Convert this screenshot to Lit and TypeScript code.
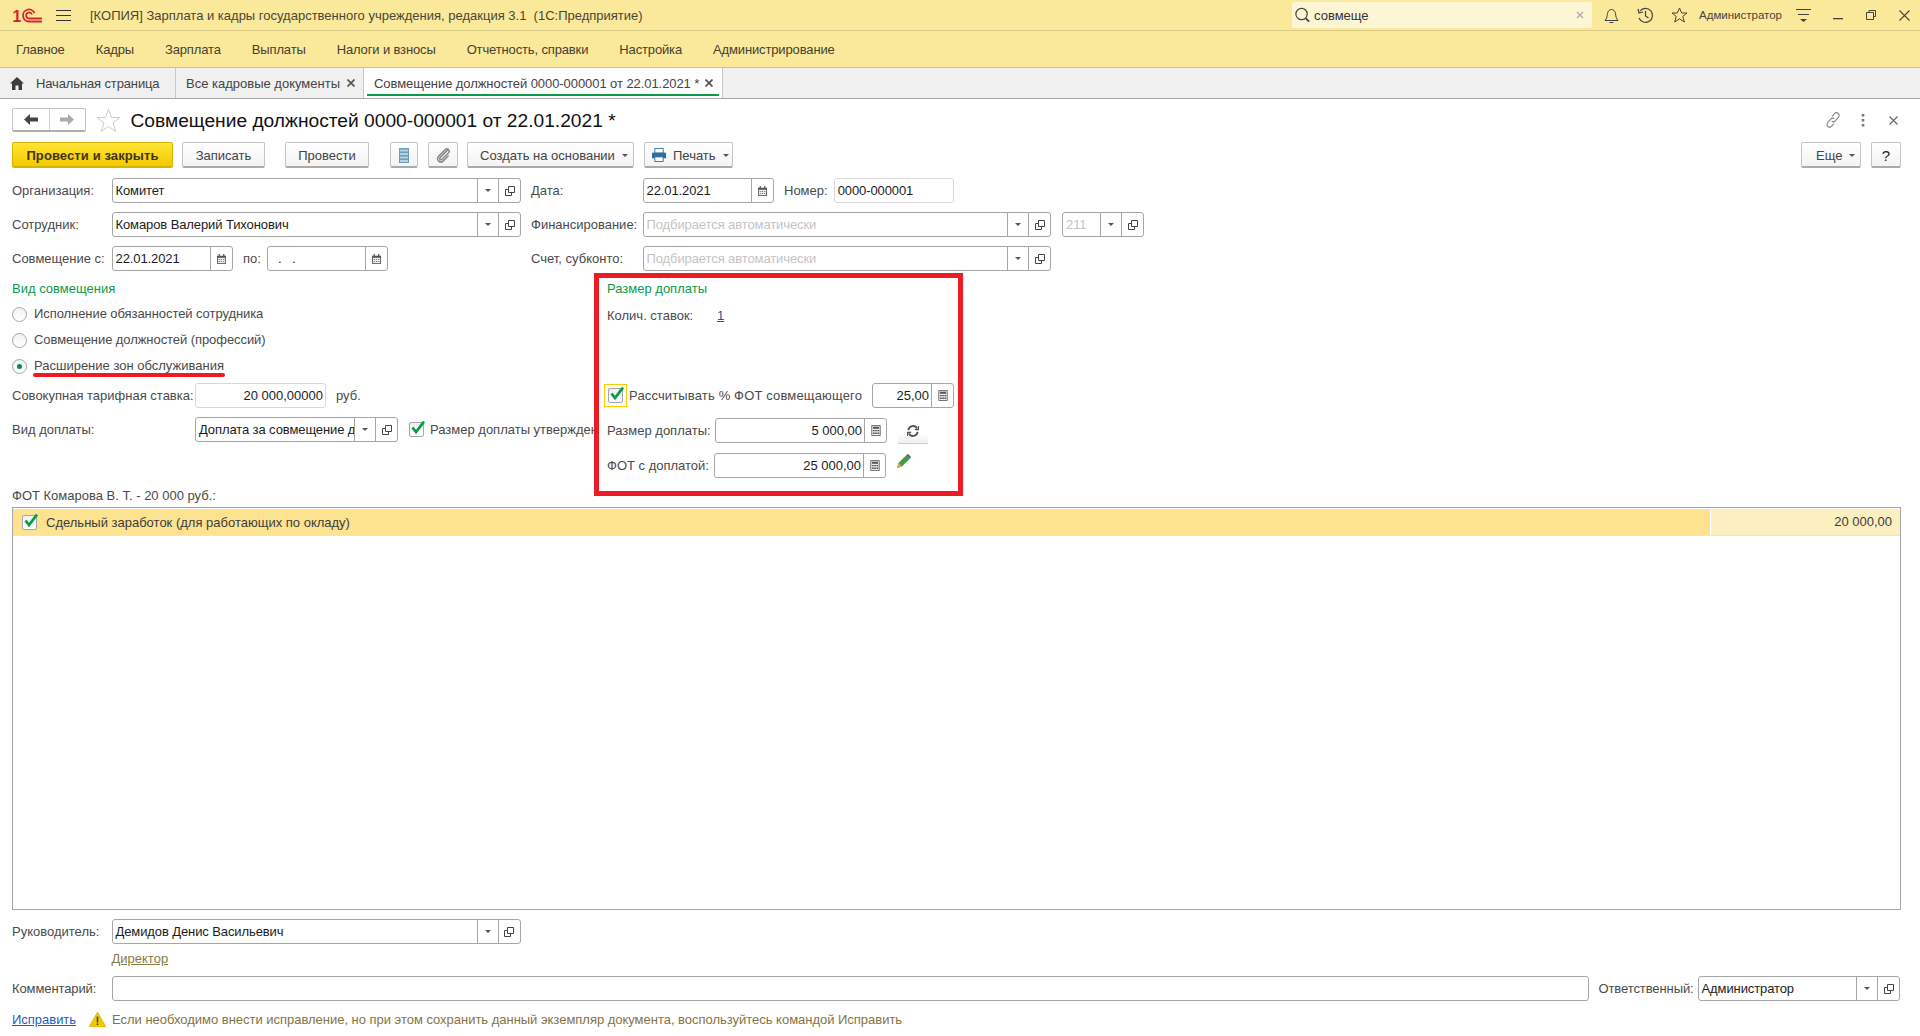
import { LitElement, html, css, svg } from 'lit'
import { customElement } from 'lit/decorators.js'

const ic = {
  caret: html`<svg class="caret" width="6" height="3" viewBox="0 0 6 3"><path d="M0 0h6L3 3z" fill="#555"/></svg>`,
  open: html`<svg width="10" height="10" viewBox="0 0 10 10" fill="none" stroke="#444"><path d="M3.500.500h6v6h-6zM3.500 3.500h-3v6h6v-3"/></svg>`,
  cal: html`<svg width="9" height="10" viewBox="0 0 11 12"><path d="M0 2h11v10H0z" fill="#555"/><path d="M2 0h1.500v3H2zM7.500 0H9v3H7.500z" fill="#555"/><path d="M1 4.500h9V11H1z" fill="#eee"/><path d="M2 6h1.500v1H2zM4.700 6h1.500v1H4.700zM7.400 6h1.500v1H7.400zM2 8.500h1.500v1H2zM4.700 8.500h1.500v1H4.700zM7.400 8.500h1.500v1H7.400z" fill="#555"/></svg>`,
  calc: html`<svg width="10" height="11" viewBox="0 0 11 13"><path d="M.5.500h10v12H.5z" fill="#eee" stroke="#555"/><path d="M2 2h7v2.500H2z" fill="#555"/><path d="M2 6h2v1.500H2zM4.600 6h2v1.500h-2zM7.200 6h2v1.500h-2zM2 9h2v1.500H2zM4.600 9h2v1.500h-2zM7.200 9h2v1.500h-2z" fill="#555"/></svg>`,
  check: html`<svg class="tick" width="16" height="15" viewBox="0 0 16 15"><path d="M3.500 7.500L7 12l8-10.500" fill="none" stroke="#0a9a4a" stroke-width="2.800"/></svg>`,
  close: html`<svg width="8" height="8" viewBox="0 0 8 8" stroke="#555" stroke-width="1.700"><path d="M.5.500l7 7M7.500.500l-7 7"/></svg>`,
}

@customElement('app-root')
class App extends LitElement {
  static styles = css`
    :host {
      display: flex;
      flex-direction: column;
      width: 1920px;
      height: 1036px;
      overflow: hidden;
      position: relative;
      background: #fff;
      font: 13px 'Liberation Sans', Arial, sans-serif;
      color: #4a4a4a;
    }
    a { color: inherit; }
    /* title bar */
    .titlebar {
      height: 30px;
      flex: none;
      display: flex;
      align-items: center;
      background: #fbe99b;
      border-bottom: 1px solid #d8ca86;
      color: #4a4636;
    }
    .logo { margin-left: 12px; width: 32px; height: 18px; }
    .burger { margin-left: 12px; width: 15px; height: 11px; border-top: 1px solid #333; border-bottom: 1px solid #333; position: relative; box-sizing: border-box; }
    .burger::after { content: ''; position: absolute; left: 0; right: 0; top: 4px; height: 1px; background: #333; }
    .apptitle { margin-left: 19px; flex: 1; white-space: pre; }
    .search { width: 300px; height: 26px; background: #fdf6d5; border-radius: 2px; display: flex; align-items: center; box-sizing: border-box; padding: 0 8px 0 2px; color: #333; }
    .search span { flex: 1; margin-left: 3px; }
    .sysicons { display: flex; align-items: center; width: 328px; }
    .sys { display: flex; justify-content: center; flex: none; }
    .s-bell { width: 38px; }
    .s-hist { width: 30px; }
    .s-star { width: 38px; }
    .user { font-size: 11.500px; width: 85px; white-space: nowrap; color: #444; }
    .s-menu { width: 40px; }
    .s-min { width: 30px; }
    .s-max { width: 36px; }
    .s-close { width: 31px; }
    /* menu */
    .menu {
      height: 36px;
      flex: none;
      display: flex;
      align-items: center;
      padding-left: 16px;
      gap: 31px;
      background: #fbe99b;
      border-bottom: 1px solid #cfc289;
      color: #444030;
      letter-spacing: -0.14px;
    }
    /* tabs */
    .tabs {
      height: 30px;
      flex: none;
      display: flex;
      background: #f0f0f0;
      border-bottom: 1px solid #a8a8a8;
    }
    .tab { display: flex; align-items: center; border-right: 1px solid #c8c8c8; white-space: nowrap; box-sizing: border-box; color: #444; position: relative; }
    .tab.home { width: 176px; padding-left: 10px; gap: 12px; letter-spacing: -0.13px; }
    .tab.docs { width: 188px; padding-left: 10px; gap: 7px; }
    .tab.cur { width: 359px; padding-left: 10px; gap: 6px; background: #fff; letter-spacing: -0.07px; }
    .tab.cur::after { content: ''; position: absolute; left: 3px; right: 3px; bottom: 2px; height: 2px; background: #0a9a4a; }
    /* form */
    .form { flex: 1; min-height: 0; display: flex; flex-direction: column; padding: 0 19px 0 12px; }
    .head { display: flex; align-items: center; height: 24px; margin-top: 9px; }
    .nav { display: flex; width: 74px; height: 24px; border: 1px solid #c4c4c4; border-bottom: 2px solid #b0b0b0; border-radius: 2px; box-sizing: border-box; }
    .nav div { flex: 1; display: flex; align-items: center; justify-content: center; }
    .nav div + div { border-left: 1px solid #d4d4d4; }
    .star { margin: 0 9.500px 0 10px; }
    h1 { margin: 0; padding-top: 1px; font-size: 19.200px; font-weight: 400; color: #111; flex: 1; white-space: nowrap; }
    .headtools { display: flex; align-items: center; gap: 20px; padding-right: 3px; }
    .headtools .hx { margin-left: 4px; }
    .bar { display: flex; height: 26px; margin-top: 10px; align-items: stretch; }
    .btn {
      box-sizing: border-box;
      display: flex;
      align-items: center;
      justify-content: center;
      gap: 7px;
      padding-top: 1px;
      border: 1px solid #c4c4c4;
      border-bottom: 2px solid #aaa;
      border-radius: 2px;
      background: linear-gradient(#fff, #f3f3f3);
      color: #444;
      white-space: nowrap;
    }
    .btn.main { width: 161px; background: linear-gradient(#ffe534, #f5c800); border-color: #d8b400; color: #3d3614; font-weight: 700; letter-spacing: 0.1px; }
    .b-save { width: 83px; margin-left: 9px; }
    .b-post { width: 84px; margin-left: 20px; }
    .b-list { width: 28px; margin-left: 21px; }
    .b-clip { width: 30px; margin-left: 10px; }
    .btn.b-base { width: 167px; margin-left: 9px; justify-content: flex-start; padding-left: 12px; }
    .btn.b-print { width: 89px; margin-left: 10px; justify-content: flex-start; padding-left: 7px; }
    .btn.b-more { width: 60px; margin-left: auto; justify-content: flex-start; padding-left: 14px; }
    .btn.b-help { width: 30px; margin-left: 10px; color: #222; font-size: 15px; }
    /* columns */
    .cols { display: flex; margin-top: 10px; }
    .left { width: 519px; flex: none; }
    .right { flex: 1; min-width: 0; }
    .row { display: flex; align-items: center; height: 25px; margin-bottom: 9px; white-space: nowrap; }
    .lab { flex: none; }
    .l-a { width: 99.500px; }
    .l-b { width: 111.500px; }
    .field {
      box-sizing: border-box;
      height: 25px;
      flex: none;
      display: flex;
      align-items: stretch;
      border: 1px solid #a6a6a6;
      border-radius: 3px;
      background: #fff;
      color: #1c1c1c;
    }
    .field.soft { border-color: #d8d8d8; }
    .val { flex: 1; min-width: 0; overflow: hidden; white-space: pre; padding: 0 3px; line-height: 23px; letter-spacing: -0.1px; }
    .val.num { text-align: right; padding-right: 2px; letter-spacing: 0; }
    .val.ph { color: #c4c4c4; }
    .fb { flex: none; display: flex; align-items: center; justify-content: center; border-left: 1px solid #a6a6a6; width: 20px; }
    .fb:last-child { width: 21px; }
    .w-org { width: 409.500px; }
    .w-short { width: 121px; }
    .w-sal { width: 131px; }
    .w-type { width: 203px; }
    .w-date { width: 131px; }
    .w-num { width: 120.500px; }
    .w-fin { width: 408.500px; }
    .w-code { width: 82px; margin-left: 11px; }
    .w-pct { width: 82px; }
    .w-sum { width: 172px; }
    .w-boss { width: 409px; }
    .w-comm { width: 1477px; }
    .w-resp { width: 202.500px; }
    .sep-a { margin: 0 6px 0 10.500px; }
    .group { color: #0a9a4a; height: 16px; line-height: 16px; margin: 10px 0 0; }
    .radios { display: flex; flex-direction: column; gap: 10px; margin-top: 9px; letter-spacing: -0.07px; }
    .radio { display: flex; align-items: center; gap: 7px; height: 16px; line-height: 16px; }
    .dot { width: 15px; height: 15px; box-sizing: border-box; border: 1px solid #a6a6a6; border-radius: 50%; display: flex; align-items: center; justify-content: center; background: linear-gradient(#f2f2f2, #fff); }
    .dot.on::after { content: ''; width: 5px; height: 5px; border-radius: 50%; background: #0a8a44; }
    .rt { position: relative; display: block; height: 16px; letter-spacing: 0; }
    .underline { position: absolute; left: -1px; right: -1px; top: 15px; height: 4px; background: #ed1c24; border-radius: 2px; }
    .cb { box-sizing: border-box; flex: none; width: 15px; height: 15px; border: 1px solid #a6a6a6; border-radius: 2px; background: linear-gradient(#f0f0f0, #fff); position: relative; }
    .tick { position: absolute; left: -1px; top: -3px; }
    .l-c { width: 183px; }
    .unit { margin-left: 10px; }
    .cb-after { margin-left: 11px; }
    .clipped { margin-left: 6px; width: 164px; flex: none; overflow: hidden; }
    .paygroup { margin-left: 76px; }
    .focus { flex: none; box-sizing: border-box; width: 23px; height: 23px; border: 1px solid #ffcc00; margin-left: -3px; display: flex; align-items: center; justify-content: center; }
    .l-d { width: 108px; }
    .l-e { width: 107px; }
    .l-rate { width: 110px; }
    .r-rate { margin: 6px 0 0; }
    .r-pct { margin: 55px 0 10px; }
    .r-sum { margin-bottom: 10px; }
    .r-fot { margin-bottom: 0; }
    .flat { width: 30px; height: 21px; margin: 0 0 -1px 11px; align-self: flex-end; box-sizing: border-box; padding-top: 2px; background: linear-gradient(#fff 55%, #eee); border-bottom: 1px solid #ccc; display: flex; align-items: flex-start; justify-content: center; }
    .pencil { margin-left: 11px; margin-top: -9px; }
    .paychk { margin-left: 2px; margin-right: 10px; width: 233px; flex: none; letter-spacing: 0.15px; }
    /* table */
    .tcap { height: 16px; line-height: 16px; margin-top: 10px; }
    .table { flex: 1; min-height: 0; margin-top: 3px; border: 1px solid #a6a6a6; padding-top: 1px; box-sizing: border-box; }
    .tr { height: 26px; display: flex; border-bottom: 1px solid #e4e4e4; color: #3c3c3c; }
    .td1 { flex: 1; background: #fde38f; display: flex; align-items: center; padding-left: 9px; gap: 9px; }
    .td2 { width: 190px; background: #fdf0c0; border-left: 1px solid #fff; text-align: right; line-height: 26px; padding-right: 8px; box-sizing: border-box; }
    /* footer */
    .foot { flex: none; padding-top: 9px; }
    .foot .row { margin-bottom: 0; }
    .pos { height: 32px; line-height: 30px; padding-left: 99.500px; }
    .pos a { color: #8a7a45; }
    .comm { flex: none; }
    .comm .lab { letter-spacing: -0.1px; }
    .comm .resp { margin-left: 10px; width: 99px; }
    .note { display: flex; align-items: center; height: 20px; margin-top: 8px; margin-bottom: 7px; color: #857443; white-space: nowrap; letter-spacing: -0.02px; }
    .note a { color: #1a5fb4; width: 77px; }
    .note svg { margin-right: 6px; }
    .num-link { color: #1f4f9f; }
    .redbox { position: absolute; left: 594px; top: 273px; width: 369px; height: 223px; box-sizing: border-box; border: 5px solid #ed1c24; }
  `

  private field(cls: string, value: string, opts: { btns?: unknown[]; num?: boolean; ph?: boolean; soft?: boolean } = {}) {
    const valCls = `val${opts.num ? ' num' : ''}${opts.ph ? ' ph' : ''}`
    return html`<div class="field ${cls} ${opts.soft ? 'soft' : ''}">
      <div class=${valCls}>${value}</div>
      ${(opts.btns ?? []).map((b) => html`<div class="fb">${b}</div>`)}
    </div>`
  }

  render() {
    const pick = [ic.caret, ic.open]
    return html`
      <div class="titlebar">
        <svg class="logo" viewBox="0 0 32 18">
          <text x="0.500" y="16" font-family="Liberation Sans" font-weight="700" font-size="16" fill="#d4242b">1</text>
          ${svg`<path d="M22.500 7A6 6 0 1 0 17 15.500H30M20 8.500A3 3 0 1 0 17 12.500H30" fill="none" stroke="#d4242b" stroke-width="1.800"/>`}
        </svg>
        <div class="burger"></div>
        <div class="apptitle">[КОПИЯ] Зарплата и кадры государственного учреждения, редакция 3.1  (1С:Предприятие)</div>
        <div class="search">
          <svg width="17" height="18" viewBox="0 0 18 18" fill="none" stroke="#444" stroke-width="1.300"><circle cx="8" cy="8" r="6"/><path d="M12.500 12.500l3.500 3.500" stroke-width="2"/></svg>
          <span>совмеще</span>
          <svg width="8" height="8" viewBox="0 0 8 8" stroke="#aaa" stroke-width="1.300"><path d="M1 1l6 6M7 1l-6 6"/></svg>
        </div>
        <div class="sysicons">
          <div class="sys s-bell"><svg width="15" height="17" viewBox="0 0 15 17" fill="none" stroke="#444"><path d="M1 13.500h13c-2-2-2-4-2.500-7-.4-2.500-2-4-4-4s-3.600 1.500-4 4c-.5 3-.5 5-2.500 7zM5.500 15.500h4"/></svg></div>
          <div class="sys s-hist"><svg width="17" height="17" viewBox="0 0 17 17" fill="none" stroke="#444" stroke-width="1.200"><path d="M3 4a7 7 0 1 1-1 7M8.500 4v5l3 2"/><path d="M1 2l1 4 4-1"/></svg></div>
          <div class="sys s-star"><svg width="17" height="16" viewBox="0 0 17 16" fill="none" stroke="#444"><path d="M8.500 1l2.200 5h5.300l-4.200 3.400 1.500 5.600-4.800-3.200L3.700 15l1.500-5.600L1 6h5.300z"/></svg></div>
          <div class="sys user">Администратор</div>
          <div class="sys s-menu"><svg width="15" height="14" viewBox="0 0 15 14" fill="#444"><path d="M0 1h15v1H0zM2 6h11v1H2zM4 11h7l-3.500 3z"/></svg></div>
          <div class="sys s-min"><svg width="10" height="10" viewBox="0 0 10 10" fill="#444"><path d="M0 8h10v1.300H0z"/></svg></div>
          <div class="sys s-max"><svg width="10" height="10" viewBox="0 0 10 10" fill="none" stroke="#444"><path d="M3 2.500V.500h6.500v6H7.500M.500 2.500h7v7h-7z"/></svg></div>
          <div class="sys s-close"><svg width="11" height="11" viewBox="0 0 11 11" stroke="#444" stroke-width="1.100"><path d="M.5.500l10 10M10.500.500l-10 10"/></svg></div>
        </div>
      </div>
      <div class="menu">
        <span>Главное</span><span>Кадры</span><span>Зарплата</span><span>Выплаты</span><span>Налоги и взносы</span><span>Отчетность, справки</span><span>Настройка</span><span>Администрирование</span>
      </div>
      <div class="tabs">
        <div class="tab home">
          <svg width="14" height="13" viewBox="0 0 14 13" fill="#3c3c3c"><path d="M7 0l7 6.500h-2V13H8.500V8.500h-3V13H2V6.500H0z"/></svg>
          <span>Начальная страница</span>
        </div>
        <div class="tab docs"><span>Все кадровые документы</span>${ic.close}</div>
        <div class="tab cur"><span>Совмещение должностей 0000-000001 от 22.01.2021 *</span>${ic.close}</div>
      </div>
      <div class="form">
        <div class="head">
          <div class="nav">
            <div><svg width="14" height="11" viewBox="0 0 14 11" fill="#444"><path d="M0 5.500L6 0v3.500h8v4H6V11z"/></svg></div>
            <div><svg width="14" height="11" viewBox="0 0 14 11" fill="#aaa"><path d="M14 5.500L8 0v3.500H0v4h8V11z"/></svg></div>
          </div>
          <svg class="star" width="25" height="24" viewBox="0 0 25 24" fill="none" stroke="#ccc"><path d="M12.500 1l3 8.500h8.500l-7 5.500 2.700 8.500-7.200-5.200-7.200 5.200L8 15 1 9.500h8.500z"/></svg>
          <h1>Совмещение должностей 0000-000001 от 22.01.2021 *</h1>
          <div class="headtools">
            <svg width="16" height="16" viewBox="0 0 18 18" fill="none" stroke="#888" stroke-width="1.300"><path d="M8 5l2.500-3a3 3 0 0 1 4.500 4l-3.500 4a3 3 0 0 1-4 .5M10 13l-2.500 3a3 3 0 0 1-4.500-4l3.500-4a3 3 0 0 1 4-.5"/></svg>
            <svg width="4" height="13" viewBox="0 0 4 13" fill="#777"><path d="M.7 0h2.600v2.600H.7zM.7 5h2.600v2.600H.7zM.7 10h2.600v2.600H.7z"/></svg>
            <svg class="hx" width="9" height="9" viewBox="0 0 9 9" stroke="#666" stroke-width="1.200"><path d="M.5.500l8 8M8.500.500l-8 8"/></svg>
          </div>
        </div>
        <div class="bar">
          <div class="btn main">Провести и закрыть</div>
          <div class="btn b-save">Записать</div>
          <div class="btn b-post">Провести</div>
          <div class="btn b-list"><svg width="10" height="15" viewBox="0 0 10 15"><path d="M0 0h10v15H0z" fill="#6f9bb8"/><path d="M1 1.500h8v2H1zM1 5h8v2H1zM1 8.500h8v2H1zM1 12h8v2H1z" fill="#b5d2e5"/></svg></div>
          <div class="btn b-clip"><svg width="15" height="15" viewBox="0 0 15 16" fill="none" stroke="#888" stroke-width="1.600"><path d="M12 2L4 10c-1.500 1.500.5 3.500 2 2l7-7c2-2-1.500-5.500-3.500-3.500L2 9c-3 3 2 8 5 5l6-6"/></svg></div>
          <div class="btn b-base">Создать на основании ${ic.caret}</div>
          <div class="btn b-print"><svg width="14" height="14" viewBox="0 0 15 15"><path d="M3 .5h9v5H3z" fill="#fff" stroke="#2f6f9f"/><path d="M0 5h15v6H0z" fill="#2f6f9f"/><path d="M3 9.500h9v5H3z" fill="#fff" stroke="#2f6f9f"/></svg> Печать ${ic.caret}</div>
          <div class="btn b-more">Еще ${ic.caret}</div>
          <div class="btn b-help">?</div>
        </div>
        <div class="cols">
          <div class="left">
            <div class="row"><span class="lab l-a">Организация:</span>${this.field('w-org', 'Комитет', { btns: pick })}</div>
            <div class="row"><span class="lab l-a">Сотрудник:</span>${this.field('w-org', 'Комаров Валерий Тихонович', { btns: pick })}</div>
            <div class="row">
              <span class="lab l-a">Совмещение с:</span>${this.field('w-short', '22.01.2021', { btns: [ic.cal] })}
              <span class="lab sep-a">по:</span>${this.field('w-short', '  .   .', { btns: [ic.cal] })}
            </div>
            <div class="group">Вид совмещения</div>
            <div class="radios">
              <div class="radio"><span class="dot"></span><span>Исполнение обязанностей сотрудника</span></div>
              <div class="radio"><span class="dot"></span><span>Совмещение должностей (профессий)</span></div>
              <div class="radio"><span class="dot on"></span><span class="rt">Расширение зон обслуживания<span class="underline"></span></span></div>
            </div>
            <div class="row" style="margin-top:9px"><span class="lab l-c">Совокупная тарифная ставка:</span>${this.field('w-sal', '20 000,00000', { num: true, soft: true })}<span class="unit">руб.</span></div>
            <div class="row">
              <span class="lab l-c">Вид доплаты:</span>${this.field('w-type', 'Доплата за совмещение должностей', { btns: pick })}
              <span class="cb cb-after">${ic.check}</span><span class="clipped">Размер доплаты утвержден</span>
            </div>
          </div>
          <div class="right">
            <div class="row">
              <span class="lab l-b">Дата:</span>${this.field('w-date', '22.01.2021', { btns: [ic.cal] })}
              <span class="lab sep-a">Номер:</span>${this.field('w-num', '0000-000001', { soft: true })}
            </div>
            <div class="row">
              <span class="lab l-b">Финансирование:</span>${this.field('w-fin', 'Подбирается автоматически', { btns: pick, ph: true })}
              ${this.field('w-code', '211', { btns: pick, ph: true })}
            </div>
            <div class="row"><span class="lab l-b">Счет, субконто:</span>${this.field('w-fin', 'Подбирается автоматически', { btns: pick, ph: true })}</div>
            <div class="paygroup">
              <div class="group">Размер доплаты</div>
              <div class="row r-rate"><span class="lab l-rate">Колич. ставок:</span><a class="num-link" href="#">1</a></div>
              <div class="row r-pct">
                <span class="focus"><span class="cb">${ic.check}</span></span>
                <span class="paychk">Рассчитывать % ФОТ совмещающего</span>
                ${this.field('w-pct', '25,00', { btns: [ic.calc], num: true })}
              </div>
              <div class="row r-sum">
                <span class="lab l-d">Размер доплаты:</span>${this.field('w-sum', '5 000,00', { btns: [ic.calc], num: true })}
                <span class="flat"><svg width="12" height="12" viewBox="0 0 13 13" fill="none" stroke="#555" stroke-width="2"><path d="M1.500 5.500A5 5 0 0 1 11 4M11.500 7.500A5 5 0 0 1 2 9"/><path d="M12.500 1v4h-4M.500 12V8h4" stroke-width="1.200"/></svg></span>
              </div>
              <div class="row r-fot">
                <span class="lab l-e">ФОТ с доплатой:</span>${this.field('w-sum', '25 000,00', { btns: [ic.calc], num: true })}
                <svg class="pencil" width="14" height="14" viewBox="0 0 14 14"><path d="M0 14l1.500-5L9.500 1l3.500 3.500-8 8z" fill="#3f9a4a"/><path d="M9.500 1L11 0l3 3-1 1.500z" fill="#555"/><path d="M0 14l1.500-5 3.500 3.500z" fill="#d9a75a"/></svg>
              </div>
            </div>
          </div>
        </div>
        <div class="tcap">ФОТ Комарова В. Т. - 20 000 руб.:</div>
        <div class="table">
          <div class="tr">
            <div class="td1"><span class="cb">${ic.check}</span><span>Сдельный заработок (для работающих по окладу)</span></div>
            <div class="td2">20 000,00</div>
          </div>
        </div>
        <div class="foot">
          <div class="row"><span class="lab l-a">Руководитель:</span>${this.field('w-boss', 'Демидов Денис Васильевич', { btns: pick })}</div>
          <div class="pos"><a href="#">Директор</a></div>
          <div class="row comm">
            <span class="lab l-a">Комментарий:</span>${this.field('w-comm', '')}
            <span class="lab resp">Ответственный:</span>${this.field('w-resp', 'Администратор', { btns: pick })}
          </div>
          <div class="note">
            <a href="#">Исправить</a>
            <svg width="17" height="15" viewBox="0 0 17 15"><path d="M8.500 0L17 15H0z" fill="#f5c800" stroke="#c9a400" stroke-width=".6"/><path d="M7.700 4.500h1.600v6H7.700zM7.700 11.500h1.600v1.600H7.700z" fill="#444"/></svg>
            <span>Если необходимо внести исправление, но при этом сохранить данный экземпляр документа, воспользуйтесь командой Исправить</span>
          </div>
        </div>
      </div>
      <div class="redbox"></div>
    `
  }
}
export default App
